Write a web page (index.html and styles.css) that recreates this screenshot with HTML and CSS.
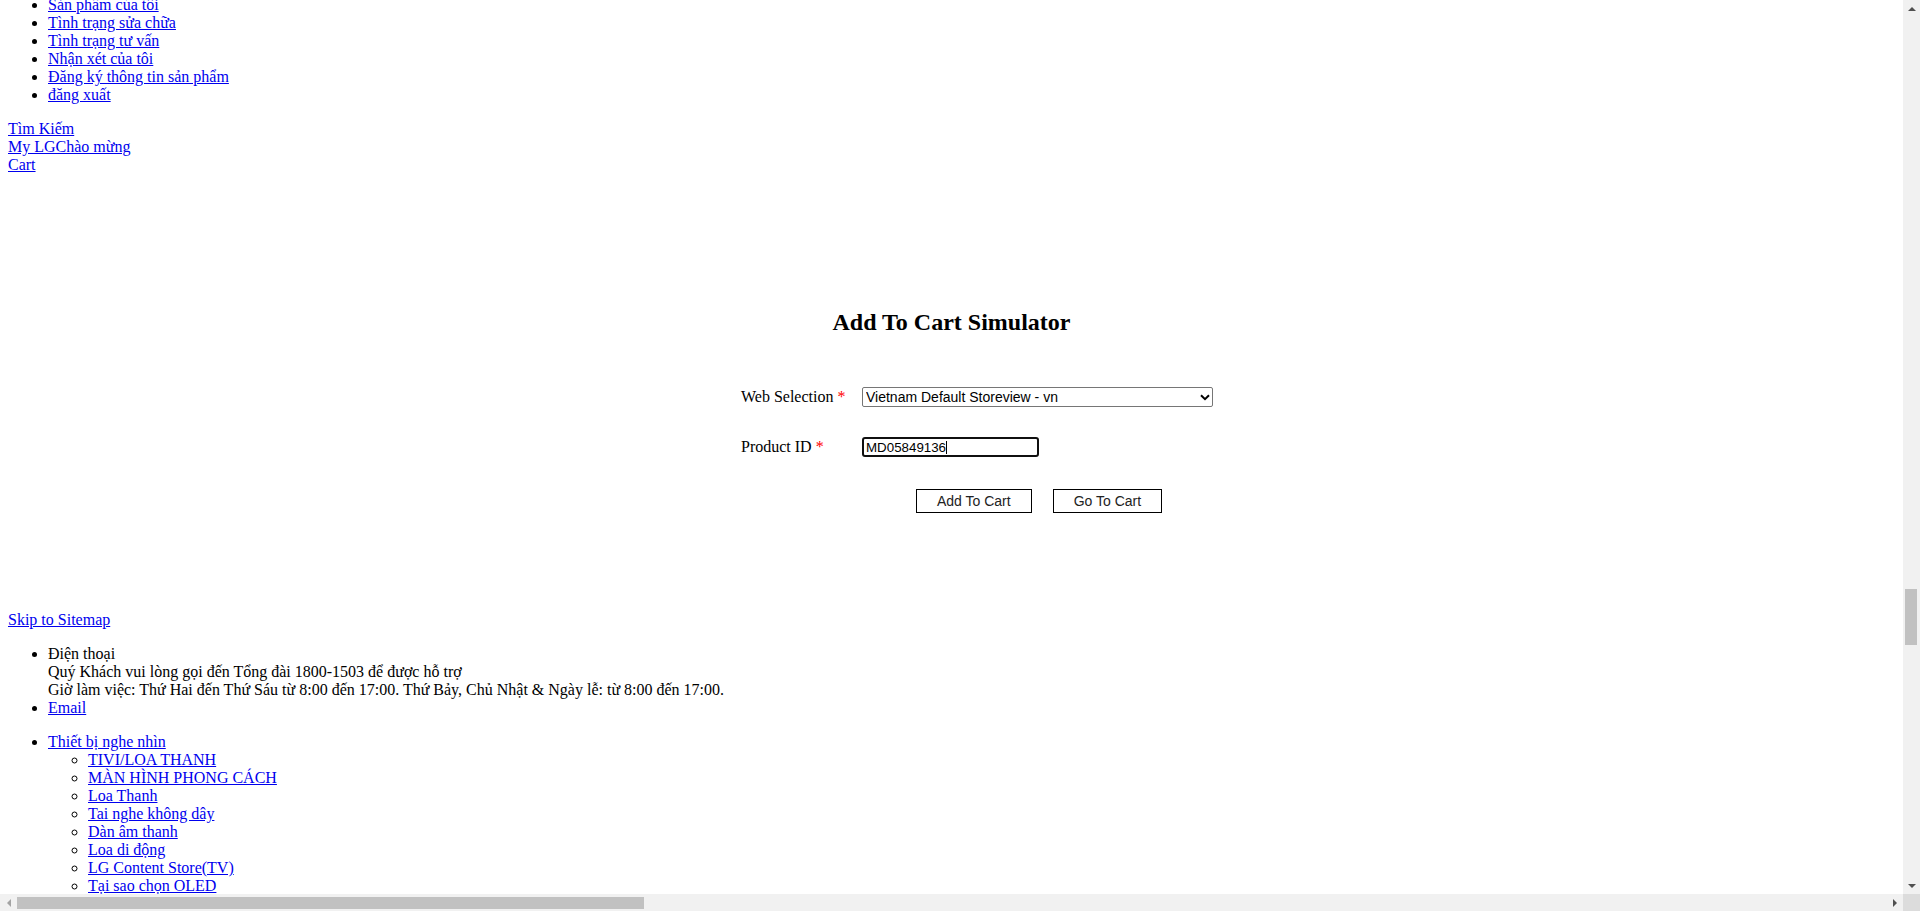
FILE: index.html
```html
<!DOCTYPE html>
<html lang="vi">
<head>
<meta charset="utf-8">
<title>Add To Cart Simulator</title>
<link rel="stylesheet" href="styles.css">
</head>
<body>
<div class="screen">
  <div class="main">
    <div class="viewport">
      <div class="page">
        <ul class="menu">
          <li><a href="#">Sản phẩm của tôi</a></li>
          <li><a href="#">Tình trạng sửa chữa</a></li>
          <li><a href="#">Tình trạng tư vấn</a></li>
          <li><a href="#">Nhận xét của tôi</a></li>
          <li><a href="#">Đăng ký thông tin sản phẩm</a></li>
          <li><a href="#">đăng xuất</a></li>
        </ul>
        <div class="util">
          <a href="#">Tìm Kiếm</a><br>
          <a href="#">My LGChào mừng</a><br>
          <a href="#">Cart</a>
        </div>

        <section class="sim">
          <h2 class="sim-title">Add To Cart Simulator</h2>
          <form class="sim-form">
            <div class="row row-select">
              <label class="lbl">Web Selection <span class="req">*</span></label>
              <div class="select-wrap">
                <select class="sel">
                  <option>Vietnam Default Storeview - vn</option>
                </select>
                <svg class="chev" width="10" height="7" viewBox="0 0 10 7"><path d="M1 1.2 L5 5.2 L9 1.2" fill="none" stroke="#000" stroke-width="2"/></svg>
              </div>
            </div>
            <div class="row row-input">
              <label class="lbl">Product ID <span class="req">*</span></label>
              <div class="input-wrap"><input class="inp" type="text" value="MD05849136"><span class="caret"></span></div>
            </div>
            <div class="row row-btns">
              <button type="button" class="btn">Add To Cart</button>
              <button type="button" class="btn">Go To Cart</button>
            </div>
          </form>
        </section>

        <div class="footer">
          <a href="#">Skip to Sitemap</a>
          <ul class="contact">
            <li>Điện thoại<br>Quý Khách vui lòng gọi đến Tổng đài 1800-1503 để được hỗ trợ<br>Giờ làm việc: Thứ Hai đến Thứ Sáu từ 8:00 đến 17:00. Thứ Bảy, Chủ Nhật &amp; Ngày lễ: từ 8:00 đến 17:00.</li>
            <li><a href="#">Email</a></li>
          </ul>
          <ul class="sitemap">
            <li><a href="#">Thiết bị nghe nhìn</a>
              <ul class="sub">
                <li><a href="#">TIVI/LOA THANH</a></li>
                <li><a href="#">MÀN HÌNH PHONG CÁCH</a></li>
                <li><a href="#">Loa Thanh</a></li>
                <li><a href="#">Tai nghe không dây</a></li>
                <li><a href="#">Dàn âm thanh</a></li>
                <li><a href="#">Loa di động</a></li>
                <li><a href="#">LG Content Store(TV)</a></li>
                <li><a href="#">Tại sao chọn OLED</a></li>
                <li><a href="#">Tại sao chọn QNED</a></li>
              </ul>
            </li>
          </ul>
        </div>
      </div>
    </div>
    <div class="vbar">
      <div class="arrow-box"><span class="tri tri-up"></span></div>
      <div class="vtrack"><div class="vthumb"></div></div>
      <div class="arrow-box"><span class="tri tri-down"></span></div>
    </div>
  </div>
  <div class="hbar">
    <div class="arrow-box"><span class="tri tri-left"></span></div>
    <div class="htrack"><div class="hthumb"></div></div>
    <div class="arrow-box"><span class="tri tri-right"></span></div>
    <div class="corner"></div>
  </div>
</div>
</body>
</html>
```

FILE: styles.css
```css
html, body {
  margin: 0;
  padding: 0;
  overflow: hidden;
  background: #fff;
}

.screen {
  width: 1920px;
  height: 911px;
  display: flex;
  flex-direction: column;
}

.main {
  display: flex;
  height: 894px;
}

.viewport {
  width: 1903px;
  height: 894px;
  overflow: hidden;
}

.page {
  font-family: "Liberation Serif", "Times New Roman", serif;
  font-size: 16px;
  line-height: 18px;
  color: #000;
  padding: 0 8px;
  margin-top: -4px;
}

a {
  color: #0000ee;
  text-decoration: underline;
}

ul {
  margin: 16px 0;
  padding-left: 40px;
  list-style: disc;
}

.menu {
  margin-top: 0;
}

/* Simulator */
.sim {
  padding-top: 134px;
}

.sim-title {
  margin: 0;
  font-size: 24px;
  line-height: 28px;
  font-weight: bold;
  text-align: center;
}

.sim-form {
  margin: 51px 0 0 733px;
}

.row {
  display: flex;
  align-items: center;
}

.row-input {
  margin-top: 30px;
}

.row-btns {
  margin-top: 32px;
  padding-left: 175px;
  gap: 21px;
}

.lbl {
  width: 121px;
  flex: none;
}

.req {
  color: #ff0000;
}

.select-wrap {
  position: relative;
  width: 351px;
  height: 20px;
}

.sel {
  -webkit-appearance: none;
  appearance: none;
  width: 351px;
  height: 20px;
  margin: 0;
  box-sizing: border-box;
  border: 1px solid #767676;
  border-radius: 2px;
  background: #fff;
  font-family: "Liberation Sans", Arial, sans-serif;
  font-size: 14px;
  color: #000;
  padding: 0 0 0 3px;
  line-height: 18px;
}

.chev {
  position: absolute;
  right: 3px;
  top: 7px;
  pointer-events: none;
}

.input-wrap {
  position: relative;
}

.inp {
  width: 177px;
  height: 20px;
  margin: 0;
  box-sizing: border-box;
  border: 2px solid #101010;
  border-radius: 3px;
  padding: 0 2px;
  font-family: "Liberation Sans", Arial, sans-serif;
  font-size: 13.33px;
  color: #000;
  outline: none;
}

.caret {
  position: absolute;
  left: 84px;
  top: 4px;
  width: 1px;
  height: 13px;
  background: #000;
}

.btn {
  height: 24px;
  margin: 0;
  box-sizing: border-box;
  border: 1px solid #000;
  border-radius: 0;
  background: #fff;
  font-family: "Liberation Sans", Arial, sans-serif;
  font-size: 14px;
  line-height: 16px;
  color: #222;
  padding: 3px 20px;
}

/* Footer */
.footer {
  padding-top: 98px;
}

.sub {
  margin: 0;
  list-style: circle;
}

/* Scrollbars */
.vbar {
  width: 17px;
  height: 894px;
  background: #f1f1f1;
  display: flex;
  flex-direction: column;
}

.arrow-box {
  width: 17px;
  height: 17px;
  flex: none;
  display: flex;
  align-items: center;
  justify-content: center;
}

.tri {
  width: 0;
  height: 0;
  border-style: solid;
}

.tri-up {
  border-width: 0 4px 4px 4px;
  border-color: transparent transparent #505050 transparent;
}

.tri-down {
  border-width: 4px 4px 0 4px;
  border-color: #505050 transparent transparent transparent;
}

.tri-left {
  border-width: 4px 4px 4px 0;
  border-color: transparent #a3a3a3 transparent transparent;
}

.tri-right {
  border-width: 4px 0 4px 4px;
  border-color: transparent transparent transparent #505050;
}

.vtrack {
  flex: 1;
  padding-top: 572px;
  box-sizing: border-box;
}

.vthumb {
  width: 12px;
  height: 56px;
  margin-left: 2px;
  background: #c1c1c1;
}

.hbar {
  height: 17px;
  display: flex;
  background: #f1f1f1;
}

.htrack {
  flex: 1;
  display: flex;
  align-items: center;
}

.hthumb {
  width: 627px;
  height: 12px;
  background: #c1c1c1;
}

.corner {
  width: 17px;
  height: 17px;
  background: #dcdcdc;
}
```
